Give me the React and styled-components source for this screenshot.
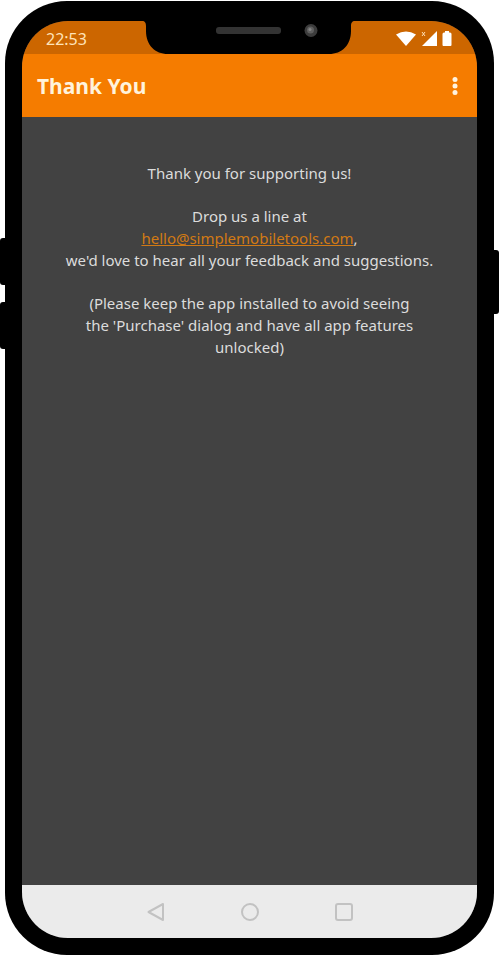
import React from 'react';
import styled, { createGlobalStyle } from 'styled-components';

const GlobalStyle = createGlobalStyle`
  *, *::before, *::after { box-sizing: border-box; }
  body {
    margin: 0;
    background: #fff;
    font-family: "Noto Sans", "Open Sans", sans-serif;
  }
`;

const Page = styled.div`
  display: flex;
  min-height: 100vh;
  padding: 1px 6px 1px 5px;
`;

const Phone = styled.div`
  position: relative;
  flex: 1;
  display: flex;
  padding: 20px 17px 17px;
  background: #000;
  border-radius: 62px;
`;

const SideKey = styled.span`
  position: absolute;
  top: ${(p) => p.$top}px;
  ${(p) => p.$side}: -5px;
  width: 10px;
  height: ${(p) => p.$length}px;
  background: #000;
  border-radius: 3px;
`;

const Screen = styled.div`
  flex: 1;
  display: flex;
  flex-direction: column;
  overflow: hidden;
  background: #424242;
  border-radius: 46px;
`;

const StatusBar = styled.div`
  display: grid;
  grid-template-columns: 1fr 213px 1fr;
  height: 33px;
  padding-right: 2px;
  background: #cc6600;
`;

const Clock = styled.time`
  padding-left: 24px;
  color: #ffe3b8;
  font-size: 16px;
  line-height: 36px;
`;

const StatusIcons = styled.div`
  display: flex;
  align-items: flex-start;
  justify-content: flex-end;
  gap: 5px;
  padding: 10px 23px 0 0;
`;

const AppBar = styled.header`
  display: flex;
  align-items: center;
  justify-content: space-between;
  height: 63px;
  padding: 0 12px 0 15px;
  background: #f57c00;
`;

const Title = styled.h1`
  margin: 0;
  color: #fff3dc;
  font-size: 21px;
  font-weight: 700;
  line-height: 32px;
`;

const IconButton = styled.button`
  display: flex;
  align-items: center;
  justify-content: center;
  width: ${(p) => p.$width}px;
  height: 32px;
  padding: 0;
  border: 0;
  background: none;
  color: inherit;
  cursor: pointer;
`;

const Content = styled.main`
  flex: 1;
  padding: 45px 40px;
  color: #dcdcdc;
  font-size: 15px;
  line-height: 22px;
  text-align: center;
`;

const Paragraph = styled.p`
  margin: 0 0 21px;
`;

const MailLink = styled.a`
  color: #d27a14;
  text-decoration: underline;
`;

const NavBar = styled.nav`
  display: flex;
  align-items: center;
  justify-content: center;
  gap: 62px;
  height: 53px;
  background: #ebebeb;
  color: #c2c2c2;
`;

function Notch() {
  return (
    <svg width="213" height="33" viewBox="0 0 213 33" aria-hidden="true">
      <path
        d="M0 0C3 0 4 2 4 5V10C4 24 13 33 26 33H187C200 33 209 24 209 10V5C209 2 210 0 213 0Z"
        fill="#000"
      />
      <rect x="74" y="6" width="65" height="7" rx="3" fill="#333" />
      <circle cx="169" cy="9.5" r="6.5" fill="#3c3c3c" />
      <circle cx="168.5" cy="9" r="3.5" fill="#606060" />
      <circle cx="168" cy="8.5" r="1.5" fill="#858585" />
    </svg>
  );
}

function WifiIcon() {
  return (
    <svg width="20" height="15" viewBox="0 0 20 15" aria-label="Wi-Fi">
      <path d="M0 3.6Q10-2.7 20 3.6L10 15Z" fill="#fff" />
    </svg>
  );
}

function SignalIcon() {
  return (
    <svg width="16" height="15" viewBox="0 0 16 15" aria-label="No mobile signal">
      <path d="M16 0V15H1Z" fill="#fff" />
      <path d="M1 1L4 5M4 1L1 5" stroke="#ffe0b8" />
    </svg>
  );
}

function BatteryIcon() {
  return (
    <svg width="10" height="15" viewBox="0 0 10 15" aria-label="Battery">
      <path
        d="M3 0H7V1.5H8Q9.5 1.5 9.5 3V14Q9.5 15 8.5 15H1.5Q.5 15 .5 14V3Q.5 1.5 2 1.5H3Z"
        fill="#fff"
      />
    </svg>
  );
}

export default function App() {
  return (
    <>
      <GlobalStyle />
      <Page>
        <Phone>
          <SideKey $side="left" $top={237} $length={47} />
          <SideKey $side="left" $top={301} $length={47} />
          <SideKey $side="right" $top={249} $length={64} />
          <Screen>
            <StatusBar>
              <Clock>22:53</Clock>
              <Notch />
              <StatusIcons>
                <WifiIcon />
                <SignalIcon />
                <BatteryIcon />
              </StatusIcons>
            </StatusBar>
            <AppBar>
              <Title>Thank You</Title>
              <IconButton $width={20} aria-label="More options">
                <svg width="6" height="20" viewBox="0 0 6 20" fill="#fff3e0">
                  <circle cx="3" cy="3.5" r="2.5" />
                  <circle cx="3" cy="10" r="2.5" />
                  <circle cx="3" cy="16.5" r="2.5" />
                </svg>
              </IconButton>
            </AppBar>
            <Content>
              <Paragraph>Thank you for supporting us!</Paragraph>
              <Paragraph>
                Drop us a line at
                <br />
                <MailLink href="mailto:hello@simplemobiletools.com">hello@simplemobiletools.com</MailLink>,
                <br />
                we'd love to hear all your feedback and suggestions.
              </Paragraph>
              <Paragraph>
                (Please keep the app installed to avoid seeing
                <br />
                the 'Purchase' dialog and have all app features
                <br />
                unlocked)
              </Paragraph>
            </Content>
            <NavBar>
              <IconButton $width={32} aria-label="Back">
                <svg width="20" height="20" viewBox="0 0 20 20" fill="none">
                  <path d="M17 2V18L2.5 10Z" stroke="currentColor" strokeWidth="2" strokeLinejoin="round" />
                </svg>
              </IconButton>
              <IconButton $width={32} aria-label="Home">
                <svg width="20" height="20" viewBox="0 0 20 20" fill="none">
                  <circle cx="10" cy="10" r="8" stroke="currentColor" strokeWidth="2" />
                </svg>
              </IconButton>
              <IconButton $width={32} aria-label="Recent apps">
                <svg width="20" height="20" viewBox="0 0 20 20" fill="none">
                  <rect x="2" y="2" width="16" height="16" rx="2" stroke="currentColor" strokeWidth="2" />
                </svg>
              </IconButton>
            </NavBar>
          </Screen>
        </Phone>
      </Page>
    </>
  );
}
